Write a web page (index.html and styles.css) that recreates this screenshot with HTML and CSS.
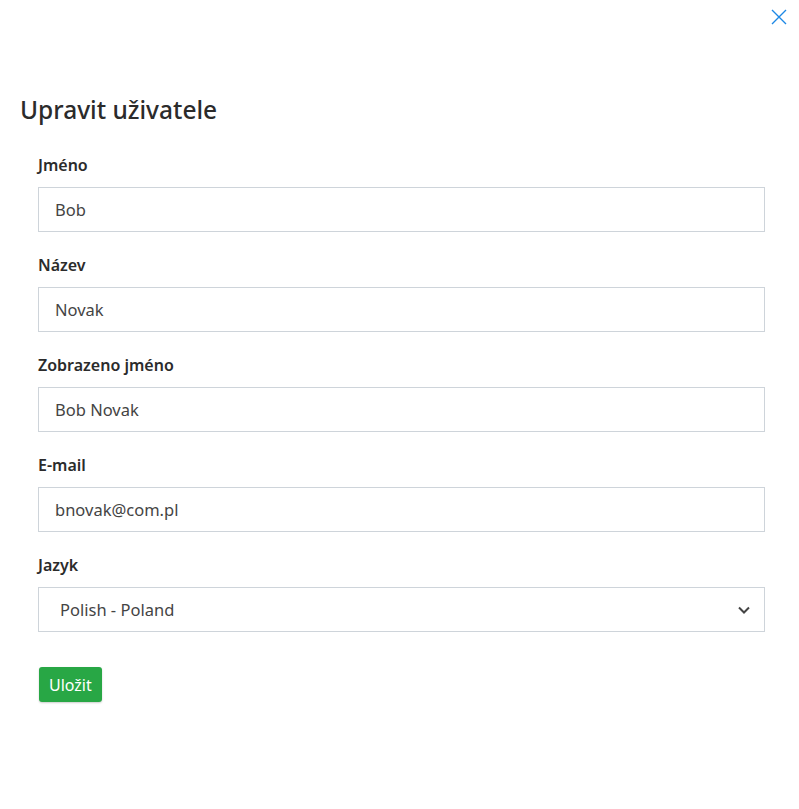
FILE: index.html
```html
<!DOCTYPE html>
<html lang="cs">
<head>
<meta charset="utf-8">
<link rel="stylesheet" href="styles.css">
</head>
<body>
<div class="modal">
  <div class="top">
    <button class="close" aria-label="Zavřít">
      <svg width="16" height="16" viewBox="0 0 16 16"><path d="M1 1L15 15M15 1L1 15" stroke="#1e88e5" stroke-width="1.4" fill="none"/></svg>
    </button>
  </div>
  <h1 class="title">Upravit uživatele</h1>
  <form class="form">
    <div class="group">
      <label class="label">Jméno</label>
      <input class="input" type="text" value="Bob">
    </div>
    <div class="group">
      <label class="label">Název</label>
      <input class="input" type="text" value="Novak">
    </div>
    <div class="group">
      <label class="label">Zobrazeno jméno</label>
      <input class="input" type="text" value="Bob Novak">
    </div>
    <div class="group">
      <label class="label">E-mail</label>
      <input class="input" type="text" value="bnovak@com.pl">
    </div>
    <div class="group">
      <label class="label">Jazyk</label>
      <div class="select">
        <span>Polish - Poland</span>
        <svg width="12" height="8" viewBox="0 0 12 8"><path d="M1 1.5L6 6.5L11 1.5" stroke="#444" stroke-width="2" fill="none"/></svg>
      </div>
    </div>
    <button class="save" type="button">Uložit</button>
  </form>
</div>
</body>
</html>
```

FILE: styles.css
```css
* { box-sizing: border-box; }
html, body { margin: 0; background: #fff; }
body { font-family: "Noto Sans", "Open Sans", sans-serif; color: #333; }
.modal { padding: 0 34px 0 20px; height: 809px; }
.top { display: flex; justify-content: flex-end; padding-top: 9px; margin-right: -22px; height: 88px; }
.close { background: none; border: 0; padding: 0; width: 16px; height: 16px; cursor: pointer; }
.title { margin: 0; font-size: 24.5px; font-weight: 500; line-height: 44px; color: #2b2b2b; }
.form { padding: 21px 0 0 18px; }
.group { margin-bottom: 21px; }
.label { display: block; font-size: 16px; font-weight: 600; line-height: 24px; margin-bottom: 10px; color: #2b2b2b; }
.input, .select { display: flex; align-items: center; width: 727px; height: 45px; border: 1px solid #ced4da; border-radius: 0; padding: 0 16px; font: inherit; font-size: 16.5px; color: #444; background: #fff; }
.input { outline: none; }
.select { justify-content: space-between; padding: 0 14px 0 21px; }
.save { margin-top: 14px; margin-left: 1px; background: #28a745; color: #fff; border: 0; border-radius: 3px; height: 35px; padding: 0 10px; font: inherit; font-size: 16px; box-shadow: 0 1px 2px rgba(0,0,0,0.2); }
```
